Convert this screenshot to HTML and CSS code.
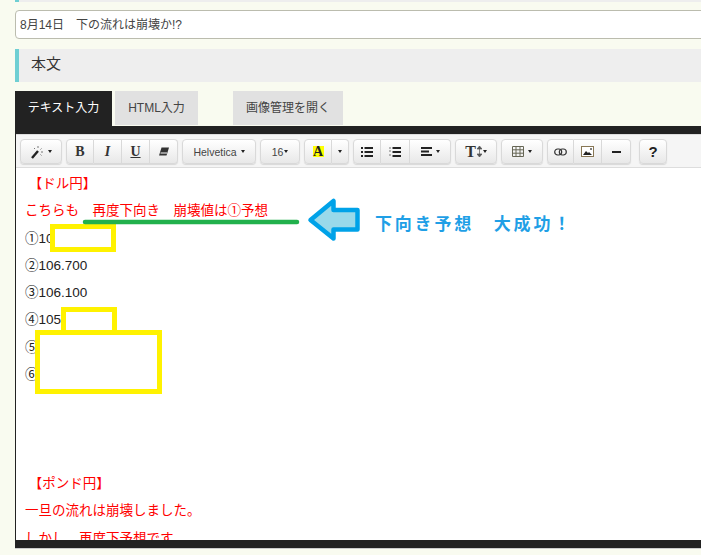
FILE: index.html
```html
<!DOCTYPE html>
<html lang="ja">
<head>
<meta charset="utf-8">
<title>本文</title>
<link rel="stylesheet" href="styles.css">
</head>
<body>
<div class="page">
  <div class="sliver"></div>
  <div class="title-input">8月14日　下の流れは崩壊か!?</div>
  <h2 class="heading">本文</h2>
  <div class="tabs">
    <div class="tab active">テキスト入力</div>
    <div class="tab html">HTML入力</div>
    <div class="tab image">画像管理を開く</div>
  </div>
  <div class="editor">
    <div class="toolbar">
      <div class="group"><div class="btn w42">
        <svg width="16" height="14" viewBox="0 0 16 14"><path d="M1 13 7 6" stroke="#222" stroke-width="2.4"/><path d="M7 1v2M10.500 3.500 9.500 4.500M3 3l1 1M10 7h2M9.500 9.500l1 1" stroke="#777" stroke-width="1"/></svg><i class="caret"></i>
      </div></div>
      <div class="group">
        <div class="btn w28 serif bold">B</div>
        <div class="btn w28 serif bold ital">I</div>
        <div class="btn w28 serif bold under">U</div>
        <div class="btn w28"><svg width="10" height="9" viewBox="0 0 10 9"><path d="M2.500 0.500H10L7.500 8.500H0z" fill="#333"/><path d="M1.500 6H8" stroke="#fff"/></svg></div>
      </div>
      <div class="group"><div class="btn w74 label">Helvetica<i class="caret wide"></i></div></div>
      <div class="group"><div class="btn w40 label">16<i class="caret"></i></div></div>
      <div class="group">
        <div class="btn w28"><span class="color-a">A</span></div>
        <div class="btn w17"><i class="caret flush"></i></div>
      </div>
      <div class="group">
        <div class="btn w28"><svg width="12" height="10" viewBox="0 0 12 10"><path d="M0 1h2M0 5h2M0 9h2M3.500 1H12M3.500 5H12M3.500 9H12" stroke="#222" stroke-width="2"/></svg></div>
        <div class="btn w29"><svg width="12" height="10" viewBox="0 0 12 10"><path d="M3.500 1H12M3.500 5H12M3.500 9H12" stroke="#222" stroke-width="2"/><path d="M0 1h2M0 4h2M0 8h2" stroke="#777" stroke-width="1"/></svg></div>
        <div class="btn w41"><svg width="11" height="9" viewBox="0 0 11 9"><path d="M0 1h11M0 4.500h8M0 8h11" stroke="#222" stroke-width="1.800"/></svg><i class="caret wide"></i></div>
      </div>
      <div class="group"><div class="btn w42 serif bold big">T<svg class="updown" width="5" height="11" viewBox="0 0 5 11"><path d="M2.500 0 5 3H0zM2.500 11 5 8H0zM2.500 2v7" stroke="#555" stroke-width="0.700" fill="#555"/></svg><i class="caret"></i></div></div>
      <div class="group"><div class="btn w42"><svg width="12" height="11" viewBox="0 0 12 11"><path d="M.5.5h11v10H.5zM.5 3.800h11M.5 7.200h11M4 .5v10M8 .5v10" fill="none" stroke="#665" stroke-width="1"/></svg><i class="caret wide"></i></div></div>
      <div class="group">
        <div class="btn w27"><svg width="13" height="8" viewBox="0 0 13 8"><rect x=".7" y="1" width="7" height="6" rx="3" fill="none" stroke="#333" stroke-width="1.200"/><rect x="5.300" y="1" width="7" height="6" rx="3" fill="none" stroke="#333" stroke-width="1.200"/></svg></div>
        <div class="btn w28"><svg width="13" height="11" viewBox="0 0 13 11"><rect x=".5" y=".5" width="12" height="10" fill="#fff" stroke="#875"/><path d="M2 9l3-4 2 2 1-1 3 3z" fill="#222"/><circle cx="10" cy="3" r="1" fill="#555"/></svg></div>
        <div class="btn w29"><svg width="9" height="2" viewBox="0 0 9 2"><path d="M0 1h9" stroke="#222" stroke-width="2"/></svg></div>
      </div>
      <div class="group apart"><div class="btn w28 help">?</div></div>
    </div>
    <div class="content">
      <p class="red">&nbsp;【ドル円】</p>
      <p class="red">こちらも　再度下向き　崩壊値は①予想</p>
      <p>①10</p>
      <p>②106.700</p>
      <p>③106.100</p>
      <p>④105</p>
      <p>⑤</p>
      <p>⑥</p>
      <p>&nbsp;</p>
      <p>&nbsp;</p>
      <p>&nbsp;</p>
      <p class="red">&nbsp;【ポンド円】</p>
      <p class="red">一旦の流れは崩壊しました。</p>
      <p class="red">しかし、再度下予想です。</p>
    </div>
  </div>
</div>
<svg class="marks" width="701" height="555" viewBox="0 0 701 555">
  <path class="yellow" d="M52.500 226.500h61v23h-61zM63.500 309.500h51v23h-51zM37.500 332.500h122v59h-122z"/>
  <path class="green" d="M85 222h212"/>
  <path class="arrow" d="M310.500 220 333.500 201v9h24v19.500h-24v9z"/>
</svg>
<div class="note">下向き予想　大成功！</div>
</body>
</html>
```

FILE: styles.css
```css
html, body {
  margin: 0;
  height: 555px;
  overflow: hidden;
  background: #f9fbf0;
}
body {
  position: relative;
  font-family: "Liberation Sans", "Noto Sans CJK JP", sans-serif;
  color: #333;
}
.page {
  width: 760px;
  padding-left: 15px;
  display: flex;
  flex-direction: column;
}
.sliver {
  height: 2px;
  background: #eee;
  border-left: 4px solid #6fcfd3;
}
.title-input {
  margin-top: 8px;
  height: 29px;
  box-sizing: border-box;
  border: 1px solid #bbbcae;
  border-radius: 4px;
  background: #fff;
  padding: 0 4px;
  font-size: 12px;
  line-height: 28px;
  color: #444;
}
.heading {
  margin: 10px 0 0;
  height: 33px;
  box-sizing: border-box;
  background: #eee;
  border-left: 4px solid #6fcfd3;
  padding-left: 12px;
  font-size: 15px;
  font-weight: normal;
  line-height: 30px;
  color: #333;
}
.tabs {
  margin-top: 9px;
  display: flex;
  align-items: flex-start;
  font-size: 12px;
  height: 35px;
}
.tab {
  height: 34px;
  line-height: 35px;
  text-align: center;
  background: #e1e1e1;
  color: #444;
}
.tab.active {
  width: 97px;
  height: 35px;
  background: #222;
  color: #fff;
}
.tab.html {
  width: 83px;
  margin-left: 3px;
}
.tab.image {
  width: 110px;
  margin-left: 35px;
}
.editor {
  height: 422px;
  box-sizing: border-box;
  border-left: 1px solid #222;
  border-top: 8px solid #222;
  border-bottom: 8px solid #222;
  background: #fff;
  display: flex;
  flex-direction: column;
  box-shadow: 0 1px 0 #ccc;
}
.toolbar {
  height: 34px;
  box-sizing: border-box;
  padding: 4px 4px 0;
  display: flex;
  gap: 4px;
  background: #f5f5f5;
  border-bottom: 1px solid #ddd;
  border-top: 1px solid #ddd;
  flex: none;
}
.group {
  display: flex;
  height: 25px;
  box-shadow: 0 1px 1px rgba(0, 0, 0, .12);
  border-radius: 4px;
}
.apart { margin-left: 4px; }
.btn {
  box-sizing: border-box;
  height: 25px;
  border: 1px solid #d9d9d9;
  border-left-width: 0;
  background: linear-gradient(#fff, #e8e8e8);
  display: flex;
  align-items: center;
  justify-content: center;
  color: #333;
  font-size: 12px;
}
.btn:first-child {
  border-left-width: 1px;
  border-radius: 4px 0 0 4px;
}
.btn:last-child {
  border-radius: 0 4px 4px 0;
}
.btn:only-child {
  border-radius: 4px;
}
.w17 { width: 17px; }
.w27 { width: 27px; }
.w28 { width: 28px; }
.w29 { width: 29px; }
.w40 { width: 40px; }
.w41 { width: 41px; }
.w42 { width: 42px; }
.w74 { width: 74px; }
.serif {
  font-family: "Liberation Serif", serif;
  font-size: 14px;
}
.bold { font-weight: bold; }
.ital { font-style: italic; }
.under { text-decoration: underline; }
.big { font-size: 16px; }
.updown { margin-left: 1px; }
.label {
  font-size: 10.500px;
  color: #444;
}
.help {
  font-size: 15px;
  font-weight: bold;
  color: #222;
}
.caret {
  width: 0;
  height: 0;
  margin-left: 1px;
  border-left: 2.500px solid transparent;
  border-right: 2.500px solid transparent;
  border-top: 3px solid #222;
}
.caret.wide { margin-left: 4px; }
.caret.flush { margin-left: 0; }
.color-a {
  width: 11px;
  height: 11px;
  background: #ff0;
  font-family: "Liberation Serif", serif;
  font-weight: bold;
  font-size: 14px;
  line-height: 11px;
  text-align: center;
  color: #222;
}
.content {
  flex: 1;
  min-height: 0;
  overflow: hidden;
  padding: 6px 9px 0;
  font-size: 13.500px;
  color: #222;
}
.content p {
  margin: 0 0 7.700px;
  line-height: 19.600px;
}
.content .red { color: #f00; }
.marks {
  position: absolute;
  left: 0;
  top: 0;
  pointer-events: none;
}
.yellow {
  fill: #fff;
  stroke: #fff200;
  stroke-width: 5;
}
.green {
  fill: none;
  stroke: #22b14c;
  stroke-width: 4.500;
  stroke-linecap: round;
}
.arrow {
  fill: #99d9ea;
  stroke: #00a2e8;
  stroke-width: 4.500;
  stroke-linejoin: round;
}
.note {
  position: absolute;
  left: 375px;
  top: 213px;
  font-size: 17px;
  line-height: 24px;
  font-weight: bold;
  letter-spacing: 2.800px;
  color: #1f9fe6;
  white-space: nowrap;
}
```
